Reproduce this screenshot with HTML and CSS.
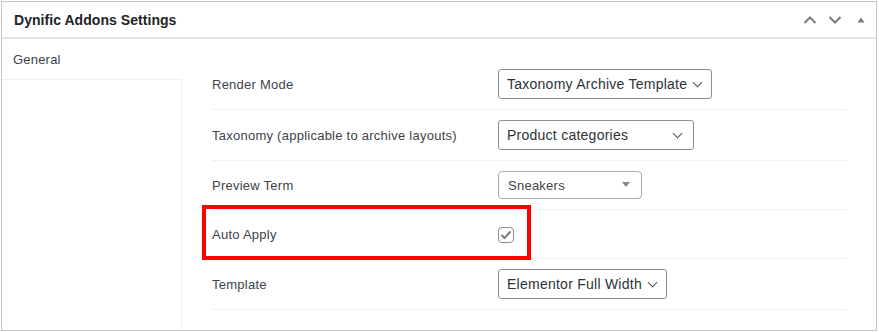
FILE: index.html
```html
<!DOCTYPE HTML>
<html>
<head>
	<meta http-equiv="Content-Type" content="text/html; charset=utf-8">
	<title>Dynific Addons Settings</title>
	<link rel="stylesheet" href="styles.css">
</head>
<body>
	<div class="postbox">
		<div class="postbox-header">
			<h2 class="hndle">Dynific Addons Settings</h2>
			<div class="handle-actions">
				<svg class="act" width="14" height="10" viewBox="0 0 14 10"><path d="M1.5 8 L7 2.5 L12.5 8" fill="none" stroke="#787c82" stroke-width="2"/></svg>
				<svg class="act" width="14" height="10" viewBox="0 0 14 10"><path d="M1.5 2 L7 7.5 L12.5 2" fill="none" stroke="#787c82" stroke-width="2"/></svg>
				<svg class="act act-tri" width="8" height="6" viewBox="0 0 8 6"><path d="M0.5 5.5 L4 0.5 L7.5 5.5 Z" fill="#787c82"/></svg>
			</div>
		</div>
		<div class="inside">
			<ul class="tabs">
				<li class="tab active">General</li>
				<li class="tab-rest"></li>
			</ul>
			<div class="panel">
				<div class="row">
					<div class="label">Render Mode</div>
					<div class="field">
						<div class="select">Taxonomy Archive Template<span class="chev"></span></div>
					</div>
				</div>
				<div class="row">
					<div class="label">Taxonomy (applicable to archive layouts)</div>
					<div class="field">
						<div class="select select-wide">Product categories<span class="chev"></span></div>
					</div>
				</div>
				<div class="row">
					<div class="label">Preview Term</div>
					<div class="field">
						<div class="select2">Sneakers<span class="tri"></span></div>
					</div>
				</div>
				<div class="row row-check">
					<div class="label">Auto Apply</div>
					<div class="field">
						<span class="checkbox">
							<svg width="12" height="10" viewBox="0 0 12 10"><path d="M1.5 5 L4.5 8 L10.5 1.5" fill="none" stroke="#787c82" stroke-width="2"/></svg>
						</span>
					</div>
					<div class="highlight"></div>
				</div>
				<div class="row">
					<div class="label">Template</div>
					<div class="field">
						<div class="select">Elementor Full Width<span class="chev"></span></div>
					</div>
				</div>
			</div>
		</div>
	</div>
</body>
</html>
```

FILE: styles.css
```css
body{
	margin: 0;
	background-color: #fff;
	font-family: "Liberation Sans", Arial, sans-serif;
	color: #3c434a;
}
.postbox{
	margin: 1px 2px 1px 1px;
	height: 330px;
	border: 1px solid #c3c4c7;
	box-sizing: border-box;
	display: flex;
	flex-direction: column;
}
.postbox-header{
	height: 36px;
	border-bottom: 2px solid #e4e4e4;
	display: flex;
	align-items: center;
	justify-content: space-between;
	padding: 0 10px 0 12px;
}
.hndle{
	margin: 0;
	font-size: 14px;
	font-weight: bold;
	color: #1d2327;
	padding-top: 1px;
	letter-spacing: 0.05px;
}
.handle-actions{
	display: flex;
	align-items: center;
	gap: 11px;
}
.act-tri{
	margin-left: 4px;
	margin-right: 1px;
}
.inside{
	flex: 1;
	display: flex;
}
.tabs{
	list-style: none;
	margin: 0;
	padding: 0;
	width: 180px;
	display: flex;
	flex-direction: column;
}
.tab{
	height: 40px;
	line-height: 42px;
	padding-left: 11px;
	font-size: 13px;
	color: #3c434a;
	letter-spacing: 0.2px;
}
.tab-rest{
	flex: 1;
	border-top: 1px solid #eee;
	border-right: 1px solid #eee;
}
.panel{
	flex: 1;
	padding: 20px 29px 20px 30px;
}
.row{
	display: grid;
	grid-template-columns: 286px 1fr;
	align-items: center;
	padding: 10px 0;
	border-bottom: 1px solid #f0f0f1;
	position: relative;
}
.row-check{
	min-height: 28px;
}
.label{
	font-size: 13px;
	color: #3c434a;
	letter-spacing: 0.25px;
}
.field{
	display: flex;
	align-items: center;
}
.select{
	height: 30px;
	box-sizing: border-box;
	border: 1px solid #8c8f94;
	border-radius: 3px;
	padding: 0 10px 0 8px;
	font-size: 14px;
	color: #2c3338;
	display: flex;
	align-items: center;
	gap: 7px;
	letter-spacing: 0.25px;
}
.select-wide{
	width: 196px;
	justify-content: space-between;
	padding-right: 12px;
}
.chev{
	width: 6px;
	height: 6px;
	border-right: 1.5px solid #50575e;
	border-bottom: 1.5px solid #50575e;
	transform: rotate(45deg);
	margin-top: -4px;
}
.select2{
	width: 144px;
	height: 28px;
	box-sizing: border-box;
	border: 1px solid #aaa;
	border-radius: 4px;
	padding: 0 11px 0 9px;
	font-size: 13px;
	color: #444;
	display: flex;
	align-items: center;
	justify-content: space-between;
	letter-spacing: 0.25px;
}
.tri{
	width: 0;
	height: 0;
	border-left: 4px solid transparent;
	border-right: 4px solid transparent;
	border-top: 5px solid #888;
	margin-top: -1px;
}
.checkbox{
	width: 16px;
	height: 16px;
	box-sizing: border-box;
	border: 1px solid #8c8f94;
	border-radius: 4px;
	display: flex;
	align-items: center;
	justify-content: center;
	margin-top: 1px;
}
.highlight{
	position: absolute;
	left: -10px;
	top: -5px;
	width: 329px;
	height: 55px;
	box-sizing: border-box;
	border: 4px solid #f00;
}
```
